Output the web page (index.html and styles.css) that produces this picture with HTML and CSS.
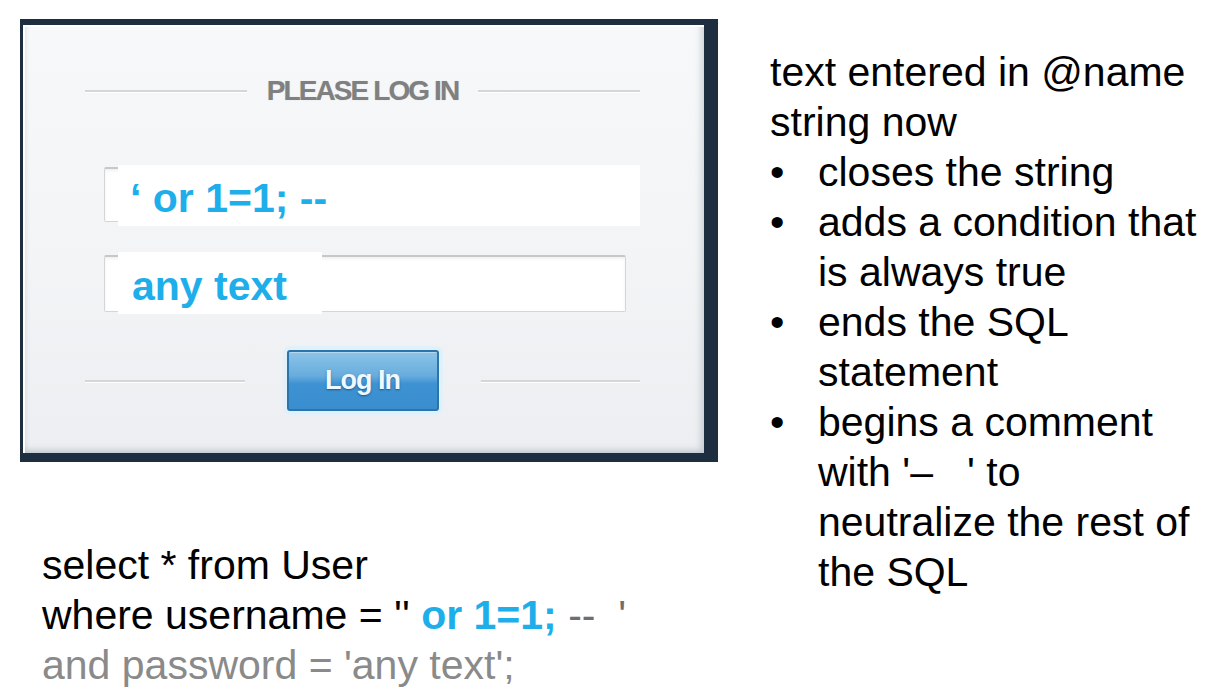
FILE: index.html
```html
<!DOCTYPE html>
<html lang="en">
<head>
<meta charset="utf-8">
<title>SQL injection</title>
<link rel="stylesheet" href="styles.css">
</head>
<body>
<div class="slide">
  <div class="left">
    <div class="frame">
      <div class="panel">
        <div class="title-row">
          <span class="rule"></span>
          <h1 class="title">PLEASE LOG IN</h1>
          <span class="rule"></span>
        </div>
        <div class="field field-user">
          <div class="patch patch-user">‘ or 1=1; --</div>
        </div>
        <div class="field field-pass">
          <div class="patch patch-pass">any text</div>
        </div>
        <div class="btn-row">
          <span class="rule"></span>
          <button class="btn" type="button">Log In</button>
          <span class="rule"></span>
        </div>
      </div>
    </div>
    <div class="sql">
      <div class="sql-line">select * from User</div>
      <div class="sql-line">where username = '' <b class="inj">or 1=1;</b> <span class="cmt">--&nbsp; '</span></div>
      <div class="sql-line muted">and password = 'any text';</div>
    </div>
  </div>
  <div class="notes">
    <p class="lead">text entered in @name<br>string now</p>
    <ul class="bullets">
      <li><span class="dot">•</span><span>closes the string</span></li>
      <li><span class="dot">•</span><span>adds a condition that<br>is always true</span></li>
      <li><span class="dot">•</span><span>ends the SQL<br>statement</span></li>
      <li><span class="dot">•</span><span>begins a comment<br>with '–&nbsp;&nbsp; ' to<br>neutralize the rest of<br>the SQL</span></li>
    </ul>
  </div>
</div>
</body>
</html>
```
FILE: styles.css
```css
html, body {
  margin: 0;
  padding: 0;
  background: #ffffff;
}

body {
  font-family: "Liberation Sans", Arial, Helvetica, sans-serif;
  color: #000;
}

.slide {
  display: flex;
  align-items: flex-start;
  width: 1212px;
  height: 700px;
  overflow: hidden;
}

.left {
  padding: 19px 0 0 20px;
  flex: none;
}

/* ---------- login screenshot ---------- */
.frame {
  box-sizing: border-box;
  width: 698px;
  height: 443px;
  border-style: solid;
  border-color: #1c2e40;
  border-width: 6px 14px 9px 3px;
  background: #1c2e40;
}

.panel {
  box-sizing: border-box;
  height: 100%;
  padding-top: 51px;
  background: linear-gradient(180deg, #f7f8f9 0%, #f2f4f6 55%, #eceef1 100%);
  box-shadow:
    inset 2px 2px 0 #ffffff,
    inset 4px 0 5px -2px rgba(60, 80, 100, 0.18),
    inset -5px -5px 6px -2px rgba(60, 80, 100, 0.22);
}

.title-row {
  display: flex;
  align-items: center;
  gap: 20px;
  width: 555px;
  height: 30px;
  margin-left: 62px;
}

.rule {
  flex: 1;
  height: 2px;
  background: #d4d6d9;
  box-shadow: 0 1px 0 #ffffff;
}

.title {
  margin: 0;
  font-size: 28px;
  line-height: 30px;
  font-weight: bold;
  letter-spacing: -1.9px;
  color: #808080;
  text-shadow: 0 0 1px rgba(0, 0, 0, 0.2);
  white-space: nowrap;
}

.field {
  position: relative;
  box-sizing: border-box;
  margin-left: 81px;
  background: #ffffff;
  border: 1px solid #d3d5d7;
  border-top: 2px solid #c6c8ca;
  border-radius: 2px;
  box-shadow: inset 0 2px 3px rgba(0, 0, 0, 0.06);
}

.field-user {
  width: 524px;
  height: 55px;
  margin-top: 61px;
}

.field-pass {
  width: 522px;
  height: 57px;
  margin-top: 33px;
}

/* white patches pasted over the inputs */
.patch {
  position: absolute;
  box-sizing: border-box;
  background: #ffffff;
  font-weight: bold;
  font-size: 41px;
  color: #1eaeea;
  white-space: nowrap;
}

.patch-user {
  left: 13px;
  top: -4px;
  width: 522px;
  height: 61px;
  padding: 5px 0 0 12px;
  line-height: 56px;
}

.patch-pass {
  left: 13px;
  top: -5px;
  width: 204px;
  height: 62px;
  padding: 6px 0 0 14px;
  line-height: 56px;
}

.btn-row {
  display: flex;
  align-items: center;
  gap: 42px;
  width: 555px;
  height: 61px;
  margin: 38px 0 0 62px;
}

.btn {
  flex: none;
  box-sizing: border-box;
  width: 152px;
  height: 61px;
  padding: 0;
  border: 2px solid #2f73ab;
  border-radius: 3px;
  background: linear-gradient(180deg, #8cc4e8 0%, #67acdd 42%, #3d92d2 56%, #3a8ecf 100%);
  box-shadow: 0 0 0 4px #e1f1fb, inset 0 1px 0 rgba(255, 255, 255, 0.35);
  font-family: "Liberation Sans", Arial, sans-serif;
  font-weight: bold;
  font-size: 27px;
  letter-spacing: -1px;
  color: #eef8ff;
  text-shadow: 0 1px 2px rgba(10, 50, 90, 0.6);
}

/* ---------- SQL text ---------- */
.sql {
  margin: 78px 0 0 22px;
  font-size: 41px;
  line-height: 50px;
  white-space: nowrap;
}

.inj {
  color: #1eaeea;
}

.cmt {
  color: #6e6e6e;
}

.muted {
  color: #8a8a8a;
}

/* ---------- notes column ---------- */
.notes {
  margin: 47px 0 0 52px;
  font-size: 41px;
  line-height: 50px;
  white-space: nowrap;
}

.lead {
  margin: 0;
}

.bullets {
  margin: 0;
  padding: 0;
  list-style: none;
}

.bullets li {
  display: flex;
}

.dot {
  flex: none;
  width: 48px;
}
```
